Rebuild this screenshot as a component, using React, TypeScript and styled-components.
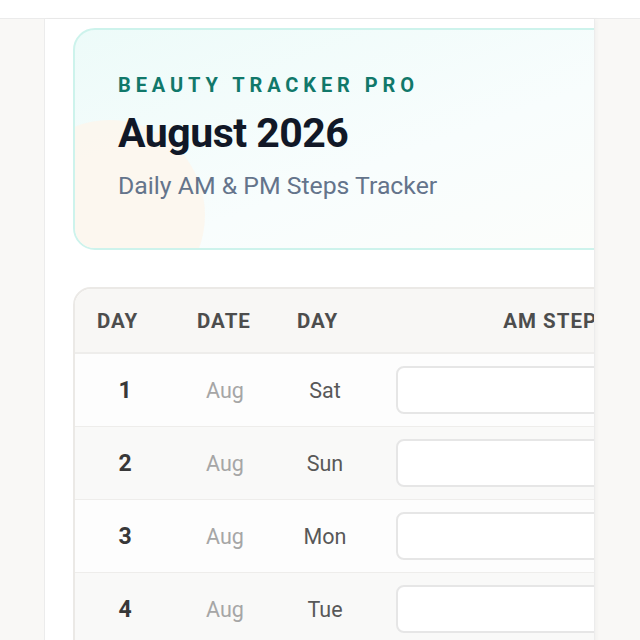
import styled, { createGlobalStyle } from 'styled-components';

const GlobalStyle = createGlobalStyle`
    html, body {
        margin: 0;
        padding: 0;
        background: #f9f8f6;
        font-family: Roboto, 'Liberation Sans', sans-serif;
        overflow: hidden;
    }
`;

const TopBar = styled.div`
    height: 18px;
    background: #ffffff;
    border-bottom: 1px solid #ebebeb;
`;

const Sheet = styled.main`
    margin-left: 44px;
    width: 551px;
    height: 640px;
    background: #ffffff;
    border-left: 1px solid #ececec;
    border-right: 1px solid #ececec;
    box-shadow: 2px 0 4px rgba(0, 0, 0, 0.03);
    overflow: hidden;
    padding: 9px 0 0 28px;
    box-sizing: border-box;
`;

const Content = styled.div`
    width: 900px;
    display: flex;
    flex-direction: column;
    gap: 37px;
`;

const Hero = styled.section`
    position: relative;
    height: 222px;
    box-sizing: border-box;
    border: 2px solid #cdf3ec;
    border-radius: 22px;
    padding: 44px 0 0 43px;
    overflow: hidden;
    background: linear-gradient(160deg, #edfbf9 0%, #f8fdfd 45%, #fffdf9 100%);
`;

const Blob = styled.div`
    position: absolute;
    left: -60px;
    top: 90px;
    width: 190px;
    height: 190px;
    border-radius: 50%;
    background: #fdf6ec;
    opacity: 0.85;
`;

const HeroText = styled.div`
    position: relative;
    display: flex;
    flex-direction: column;
`;

const Eyebrow = styled.div`
    font-size: 20px;
    font-weight: 700;
    letter-spacing: 4.9px;
    color: #11786a;
    line-height: 22px;
`;

const Title = styled.h1`
    margin: 14px 0 0;
    font-size: 41px;
    font-weight: 700;
    letter-spacing: -0.5px;
    color: #111827;
    line-height: 46px;
`;

const Subtitle = styled.p`
    margin: 16px 0 0;
    font-size: 24.8px;
    font-weight: 400;
    color: #64748b;
    line-height: 28px;
`;

const Table = styled.div`
    border: 2px solid #ebe9e6;
    border-radius: 18px;
    overflow: hidden;
    background: #ffffff;
`;

const Row = styled.div<{ $shade?: boolean; $head?: boolean }>`
    display: grid;
    grid-template-columns: 100px 100px 100px 364px;
    align-items: center;
    height: ${(p) => (p.$head ? 63 : 72)}px;
    border-bottom: ${(p) => (p.$head ? '2px' : '1px')} solid #eeedeb;
    background: ${(p) => (p.$head ? '#f8f7f5' : p.$shade ? '#f9f9f8' : '#fdfdfd')};
`;

const HeadCell = styled.div<{ $center?: boolean }>`
    padding-left: ${(p) => (p.$center ? 0 : 22)}px;
    text-align: ${(p) => (p.$center ? 'center' : 'left')};
    font-size: 20.5px;
    font-weight: 700;
    letter-spacing: 1px;
    color: #4d4d4d;
`;

const Cell = styled.div<{ $tone: 'num' | 'muted' | 'day' }>`
    text-align: center;
    font-size: ${(p) => (p.$tone === 'num' ? 23 : 21.5)}px;
    font-weight: ${(p) => (p.$tone === 'num' ? 700 : 400)};
    color: ${(p) => (p.$tone === 'num' ? '#383838' : p.$tone === 'muted' ? '#a6a6a6' : '#585858')};
`;

const InputCell = styled.div`
    padding-left: 21px;
`;

const StepInput = styled.input`
    display: block;
    width: 320px;
    height: 48px;
    box-sizing: border-box;
    border: 2px solid #e6e6e6;
    border-radius: 8px;
    background: #ffffff;
    outline: none;
`;

const days = [
    { n: 1, d: 'Sat' },
    { n: 2, d: 'Sun' },
    { n: 3, d: 'Mon' },
    { n: 4, d: 'Tue' },
    { n: 5, d: 'Wed' },
];

export default function App() {
    return (
        <>
            <GlobalStyle />
            <TopBar />
            <Sheet>
                <Content>
                    <Hero>
                        <Blob />
                        <HeroText>
                            <Eyebrow>BEAUTY TRACKER PRO</Eyebrow>
                            <Title>August 2026</Title>
                            <Subtitle>Daily AM &amp; PM Steps Tracker</Subtitle>
                        </HeroText>
                    </Hero>

                    <Table>
                        <Row $head>
                            <HeadCell>DAY</HeadCell>
                            <HeadCell>DATE</HeadCell>
                            <HeadCell>DAY</HeadCell>
                            <HeadCell $center>AM STEPS</HeadCell>
                        </Row>
                        {days.map((row) => (
                            <Row key={row.n} $shade={row.n % 2 === 0}>
                                <Cell $tone="num">{row.n}</Cell>
                                <Cell $tone="muted">Aug</Cell>
                                <Cell $tone="day">{row.d}</Cell>
                                <InputCell>
                                    <StepInput />
                                </InputCell>
                            </Row>
                        ))}
                    </Table>
                </Content>
            </Sheet>
        </>
    );
}
